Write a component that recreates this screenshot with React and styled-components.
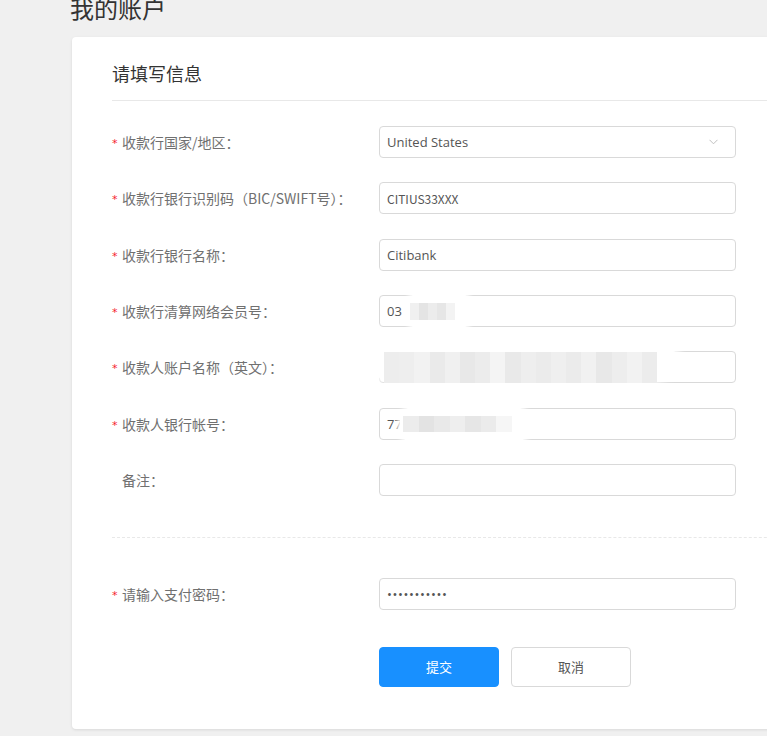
import React from "react";
import styled, { createGlobalStyle } from "styled-components";

const Global = createGlobalStyle`
  html, body { margin: 0; padding: 0; }
  body {
    background: #f0f0f0;
    overflow: hidden;
    font-family: "Noto Sans CJK SC", "Open Sans", sans-serif;
  }
`;

const Page = styled.div`
  padding-left: 72px;
  height: 736px;
  box-sizing: border-box;
`;

const Title = styled.h1`
  margin: -4px 0 0 -2px;
  font-size: 24px;
  line-height: 24px;
  font-weight: 400;
  color: #333;
`;

const Card = styled.div`
  margin-top: 17px;
  width: 760px;
  height: 692px;
  box-sizing: border-box;
  background: #fff;
  border-radius: 4px;
  box-shadow: 0 1px 3px rgba(0, 0, 0, 0.1);
  padding-left: 40px;
`;

const CardHeader = styled.div`
  padding: 24px 0 15px;
  line-height: 24px;
  font-size: 18px;
  color: #333;
  border-bottom: 1px solid #e8e8e8;
`;

const Form = styled.div`
  padding-top: 25px;
  display: flex;
  flex-direction: column;
`;

const Rows = styled.div`
  display: flex;
  flex-direction: column;
  gap: 24.33px;
`;

const Row = styled.div`
  display: grid;
  grid-template-columns: 267px 357px;
  align-items: center;
  height: 32px;
`;

const Label = styled.div`
  display: flex;
  align-items: center;
  font-size: 14px;
  color: #707070;
  white-space: nowrap;
`;

const Star = styled.span`
  display: inline-block;
  width: 10px;
  color: #f5222d;
  font-family: "DejaVu Sans", sans-serif;
  font-size: 11px;
  line-height: 1;
  padding-top: 3px;
`;

const Field = styled.div`
  position: relative;
  height: 32px;
`;

const Input = styled.input`
  box-sizing: border-box;
  width: 100%;
  height: 32px;
  border: 1px solid #d9d9d9;
  border-radius: 4px;
  padding: 0 7px;
  font-family: ${(p) => (p.$narrow ? '"Noto Sans CJK SC", sans-serif' : '"Open Sans", "Noto Sans CJK SC", sans-serif')};
  font-size: ${(p) => (p.$narrow ? "12px" : "13px")};
  letter-spacing: ${(p) => (p.$dots ? "0.6px" : "0")};
  color: #555;
  background: #fff;
  outline: none;
`;

const SelectBox = styled.div`
  box-sizing: border-box;
  height: 32px;
  border: 1px solid #d9d9d9;
  border-radius: 4px;
  padding: 0 7px 0 7px;
  display: flex;
  align-items: center;
  justify-content: space-between;
  font-family: "Open Sans", sans-serif;
  font-size: 13px;
  color: #555;
`;

const Chevron = styled.svg`
  width: 9px;
  height: 6px;
  margin-right: 10px;
`;

const Blob = styled.div`
  position: absolute;
  left: ${(p) => p.$l}px;
  top: ${(p) => p.$t}px;
  width: ${(p) => p.$w}px;
  height: ${(p) => p.$h}px;
  background: #fff;
  border-radius: 40%;
  box-shadow: 0 0 4px 3px rgba(255, 255, 255, 0.9);
`;

const Mosaic = styled.div`
  position: absolute;
  left: ${(p) => p.$l}px;
  top: ${(p) => p.$t}px;
  width: ${(p) => p.$w}px;
  height: ${(p) => p.$h}px;
  display: flex;
`;

const Cell = styled.div`
  flex: 1;
  background: ${(p) => p.$c};
`;

const Dashed = styled.div`
  margin-top: 41px;
  border-top: 1px dashed #e8e8e8;
`;

const PwdRow = styled(Row)`
  margin-top: 40px;
`;

const Buttons = styled.div`
  margin-top: 37px;
  margin-left: 267px;
  display: flex;
  gap: 12px;
`;

const Button = styled.button`
  width: 120px;
  height: 40px;
  border-radius: 4px;
  font-family: "Noto Sans CJK SC", sans-serif;
  font-size: 13px;
  cursor: pointer;
  border: 1px solid ${(p) => (p.$primary ? "#1890ff" : "#d9d9d9")};
  background: ${(p) => (p.$primary ? "#1890ff" : "#fff")};
  color: ${(p) => (p.$primary ? "#fff" : "#555")};
`;

const Redact = ({ blob, mosaic, colors }) => (
  <>
    <Blob $l={blob[0]} $t={blob[1]} $w={blob[2]} $h={blob[3]} />
    <Mosaic $l={mosaic[0]} $t={mosaic[1]} $w={mosaic[2]} $h={mosaic[3]}>
      {colors.map((c, i) => (
        <Cell key={i} $c={c} />
      ))}
    </Mosaic>
  </>
);

const FormRow = ({ label, required = true, children }) => (
  <Row>
    <Label>
      <Star>{required ? "*" : ""}</Star>
      {label}
    </Label>
    <Field>{children}</Field>
  </Row>
);

export default function App() {
  return (
    <>
      <Global />
      <Page>
        <Title>我的账户</Title>
        <Card>
          <CardHeader>请填写信息</CardHeader>
          <Form>
            <Rows>
              <FormRow label="收款行国家/地区：">
                <SelectBox>
                  <span>United States</span>
                  <Chevron viewBox="0 0 9 6">
                    <path d="M0.5 0.8 L4.5 4.8 L8.5 0.8" fill="none" stroke="#bfbfbf" strokeWidth="1" />
                  </Chevron>
                </SelectBox>
              </FormRow>
              <FormRow label="收款行银行识别码（BIC/SWIFT号）：">
                <Input $narrow readOnly value="CITIUS33XXX" />
              </FormRow>
              <FormRow label="收款行银行名称：">
                <Input readOnly value="Citibank" />
              </FormRow>
              <FormRow label="收款行清算网络会员号：">
                <Input readOnly value="03" />
                <Redact
                  blob={[29, -8, 62, 48]}
                  mosaic={[31, 8, 45, 17]}
                  colors={["#f0f0f0", "#e4e4e4", "#ececec", "#e6e6e6", "#f3f3f3"]}
                />
              </FormRow>
              <FormRow label="收款人账户名称（英文）：">
                <Input readOnly value="" />
                <Redact
                  blob={[-13, -13, 316, 51]}
                  mosaic={[5, 1, 273, 31]}
                  colors={[
                    "#ededed", "#eeeeee", "#f2f2f2", "#eaeaea", "#f0f0f0", "#e8e8e8",
                    "#ececec", "#f4f4f4", "#e9e9e9", "#eeeeee", "#ebebeb", "#efefef",
                    "#ebebeb", "#f1f1f1", "#e8e8e8", "#ededed", "#f2f2f2", "#ececec",
                  ]}
                />
              </FormRow>
              <FormRow label="收款人银行帐号：">
                <Input readOnly value="77" />
                <Redact
                  blob={[21, -10, 128, 54]}
                  mosaic={[24, 8, 109, 16]}
                  colors={["#ececec", "#e3e3e3", "#e9e9e9", "#eeeeee", "#e6e6e6", "#ebebeb", "#f6f6f6"]}
                />
              </FormRow>
              <FormRow label="备注：" required={false}>
                <Input readOnly value="" />
              </FormRow>
            </Rows>
            <Dashed />
            <PwdRow>
              <Label>
                <Star>*</Star>请输入支付密码：
              </Label>
              <Field>
                <Input $dots readOnly value="•••••••••••" />
              </Field>
            </PwdRow>
            <Buttons>
              <Button $primary>提交</Button>
              <Button>取消</Button>
            </Buttons>
          </Form>
        </Card>
      </Page>
    </>
  );
}
